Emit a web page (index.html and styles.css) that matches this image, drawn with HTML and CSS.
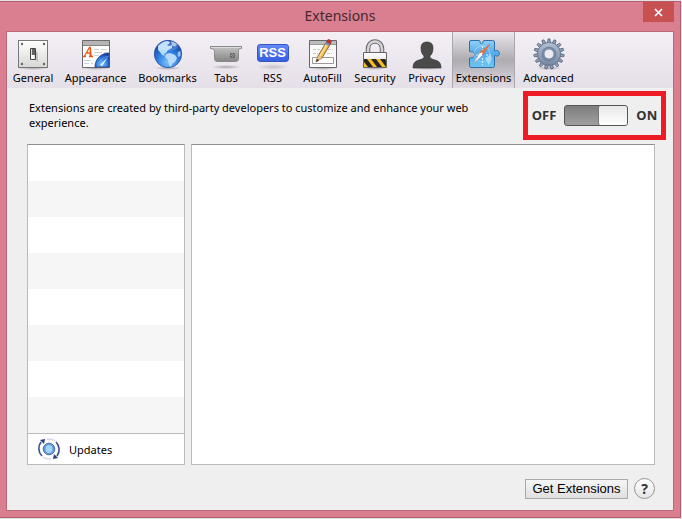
FILE: index.html
```html
<!DOCTYPE html>
<html lang="en">
<head>
<meta charset="utf-8">
<title>Extensions</title>
<link rel="stylesheet" href="styles.css">
</head>
<body>
<main class="window">
  <header class="titlebar">
    <h1 class="title">Extensions</h1>
    <button class="close" type="button" aria-label="Close"><svg width="9" height="9" viewBox="0 0 9 9"><path d="M1 1l7 7M8 1L1 8" stroke="#fff" stroke-width="1.7"/></svg></button>
  </header>
  <div class="client">
    <nav class="toolbar" aria-label="Preferences">
      <button class="tab" type="button">
        <svg class="icon" viewBox="0 0 32 32">
          <defs>
            <linearGradient id="plate" x2="0" y2="1"><stop stop-color="#fff"/><stop offset="1" stop-color="#d7d7d5"/></linearGradient>
            <radialGradient id="globe" cx=".5" cy=".8" r=".8"><stop stop-color="#7cc4fb"/><stop offset=".5" stop-color="#2f7be0"/><stop offset="1" stop-color="#12389a"/></radialGradient>
            <linearGradient id="metal" x2="0" y2="1"><stop stop-color="#c4c4c4"/><stop offset="1" stop-color="#858585"/></linearGradient>
            <radialGradient id="shade"><stop stop-color="#444" stop-opacity=".4"/><stop offset="1" stop-color="#444" stop-opacity="0"/></radialGradient>
          </defs>
          <ellipse cx="16" cy="30" rx="16" ry="2" fill="url(#shade)"/>
          <rect x="1.500" y="2.500" width="29" height="27" fill="url(#plate)" stroke="#777"/>
          <g fill="#666"><circle cx="5" cy="6" r="1.200"/><circle cx="27" cy="6" r="1.200"/><circle cx="5" cy="26" r="1.200"/><circle cx="27" cy="26" r="1.200"/></g>
          <path d="M18 22l3 2v-9l-2-2z" fill="#999" opacity=".5"/>
          <path d="M13.500 10.500h5v11h-5z" fill="#ddd" stroke="#444"/><path d="M15 11h3v6h-3z" fill="#666"/><path d="M14 17h3v4h-3z" fill="#fff"/>
        </svg>
        <span>General</span>
      </button>
      <button class="tab" type="button">
        <svg class="icon" viewBox="0 0 32 32">
          <ellipse cx="16" cy="30" rx="16" ry="2" fill="url(#shade)"/>
          <path d="M2.500 2.500h27v27h-27z" fill="#fdfdfd" stroke="#6c6c6c"/>
          <path d="M3 3h26v4H3z" fill="#b5b5b5"/><path d="M3 7.500h26" stroke="#858585"/>
          <path d="M14 11.500h5m2 0h6M14 14.500h8m2 0h3M14 17.500h5M4 22.500h7M4 25.500h5m2 0h2" stroke="#d0d0d0"/>
          <path d="M4.500 18L9.500 9.500h.8L11 18M7 15h4M3 18.500h3m3 0h4" fill="none" stroke="#ea561c" stroke-width="1.300"/><path d="M9.800 9l1.700 9H9.500z" fill="#ea561c"/>
          <path d="M15 29c0-8 6-14 14-14v14z" fill="url(#globe)" stroke="#1d3f8c" stroke-width=".8"/>
          <path d="M18 29c1-6 5-10 11-11M19 20l4 5" fill="none" stroke="#6fa8ec" stroke-width=".7"/>
          <path d="M20 27l8-8-6 9z" fill="#e8f5ff"/>
        </svg>
        <span>Appearance</span>
      </button>
      <button class="tab" type="button">
        <svg class="icon" viewBox="0 0 32 32">
          <ellipse cx="16" cy="30" rx="13" ry="2" fill="url(#shade)"/>
          <circle cx="16" cy="16" r="13.700" fill="url(#globe)" stroke="#1c4b9e" stroke-width=".7"/>
          <g fill="#b5dcf8">
            <path d="M6 8c3-3 6-4.500 9-5l3 1-1 2-2 1 2 1 3-1v3l-4 2-2 3-2 1 1 2-3-1-2-3-2-2z"/>
            <path d="M14 16l4-1 5 2 2 3-2 4-3 2-1 3-2-2-1-5-3-3z"/>
            <path d="M19 3.500c3 0 5 2 6 3l-2 2-3-1zM26 14l2.500-1v5l-2 1-1-2z" opacity=".8"/>
          </g>
          <ellipse cx="16" cy="8" rx="10.500" ry="5" fill="#fff" opacity=".18"/>
        </svg>
        <span>Bookmarks</span>
      </button>
      <button class="tab" type="button">
        <svg class="icon" viewBox="0 0 32 32">
          <ellipse cx="16" cy="29" rx="15" ry="2" fill="url(#shade)"/>
          <path d="M.5 8.500h31v2c-3 0-3 1-3 4v6c0 2-1 3-3 3h-18c-2 0-3-1-3-3v-6c0-3-1-4-4-4z" fill="url(#metal)" stroke="#888"/>
          <path d="M1 9.500h30" stroke="#ddd"/>
          <path d="M20.500 15.500h4v4h-4zM21 16l3 3m0-3l-3 3" fill="none" stroke="#606060" stroke-width=".8"/>
        </svg>
        <span>Tabs</span>
      </button>
      <button class="tab" type="button">
        <span class="icon rss"><b>RSS</b></span>
        <span>RSS</span>
      </button>
      <button class="tab" type="button">
        <svg class="icon" viewBox="0 0 32 32">
          <ellipse cx="16" cy="30" rx="15" ry="2" fill="url(#shade)"/>
          <path d="M2.500 2.500h27v27h-27z" fill="#fafafa" stroke="#666"/><path d="M3 3h26v3H3z" fill="#bdbdbd"/><path d="M3 6.500h26" stroke="#999"/>
          <path d="M6 11.500h8m7 0h5M6 15.500h5m9 0h5" stroke="#ccc" stroke-dasharray="3 1"/>
          <path d="M5.500 19.500h21v6h-21z" fill="#fff" stroke="#999"/>
          <path d="M9 24l2-6L20 3l4 2-9 15z" fill="#f3bd54" stroke="#704b25" stroke-width=".8"/>
          <path d="M13 18l8-14" stroke="#ffe59b" stroke-width="1.400"/>
          <path d="M19 5l2-4 3 1 1 1-2 4z" fill="#b93030"/><path d="M18 6l1-2 4 2-1 2z" fill="#7890b5"/>
          <path d="M9 24l2-6 4 2z" fill="#e5c18c"/><path d="M9 24l1-3 2 1z" fill="#222"/>
        </svg>
        <span>AutoFill</span>
      </button>
      <button class="tab" type="button">
        <svg class="icon" viewBox="0 0 32 32">
          <ellipse cx="16" cy="30" rx="14" ry="2" fill="url(#shade)"/>
          <path d="M9 16v-5C9 1 23 1 23 11v5" fill="none" stroke="#686868" stroke-width="4.500"/>
          <path d="M9 16v-5C9 1 23 1 23 11v5" fill="none" stroke="#d4d4d4" stroke-width="2.500"/>
          <path d="M4.500 14.500h23v15h-23z" fill="url(#plate)" stroke="#666"/>
          <path d="M5 21h22v8H5z" fill="#f6bd24"/>
          <path d="M5 21h3l6 8H9l-4-5zM12 21h5l6 8h-5zM21 21h5l1 1v7z" fill="#292620"/>
        </svg>
        <span>Security</span>
      </button>
      <button class="tab" type="button">
        <svg class="icon" viewBox="0 0 32 32">
          <ellipse cx="16" cy="30" rx="15" ry="2" fill="url(#shade)"/>
          <path d="M2 30c0-5 2-7 6-8 4-1 5-2 5-4-2-2-3-4-3-8 0-4 2-6 6-6s6 2 6 6c0 4-1 6-3 8 0 2 1 3 5 4 4 1 6 3 6 8z" fill="#4a4a4a" stroke="#303030" stroke-width=".6"/>
        </svg>
        <span>Privacy</span>
      </button>
      <button class="tab selected" type="button" aria-current="page">
        <svg class="icon" viewBox="0 0 32 32">
          <defs><linearGradient id="puzzle" x2="0" y2="1"><stop stop-color="#8fd0f7"/><stop offset=".5" stop-color="#53a9e8"/><stop offset="1" stop-color="#6cc8f2"/></linearGradient></defs>
          <path d="M1.500 4Q1.500 2.500 3 2.500H11C13 2.500 11 5.500 13.500 5.500S14 2.500 16 2.500H24.500Q26.500 2.500 26.500 4V13C28 13 28 12 29.500 12.500 32 13.500 32 17.500 29.500 18 28 18.300 28 17.500 26.500 17.500V27.500Q26.500 29.500 24.500 29.500H3Q1.500 29.500 1.500 27.500V20C3 19 6 21 6.500 17 6.500 12.500 3 14.500 1.500 13.500Z" fill="url(#puzzle)" stroke="#2f6ea8"/>
          <path d="M14.500 8v5m0 7v7M8 17h3m7 0h6" stroke="#e0f3ff" stroke-dasharray="2 1"/>
          <circle cx="14" cy="16" r="8" fill="none" stroke="#b6e2fa" stroke-width=".6"/>
          <path d="M17 20l5-3 2 3-1 3-2 4-2-3z" fill="#b5e3fb" opacity=".8"/>
          <path d="M5 26l7-12 3 3z" fill="#f8f8f8" stroke="#8593a0" stroke-width=".5"/><path d="M22 6l-7 11-3-3z" fill="#ed713d" stroke="#b7532d" stroke-width=".3"/><circle cx="13.500" cy="15.500" r="1" fill="#fff"/>
        </svg>
        <span>Extensions</span>
      </button>
      <button class="tab" type="button">
        <svg class="icon" viewBox="0 0 32 32">
          <defs>
            <linearGradient id="steel" x2="0" y2="1"><stop stop-color="#b3c0d2"/><stop offset="1" stop-color="#7486a2"/></linearGradient>
            <path id="tooth" d="M14.300 5.500L15 .9h2l.7 4.600z"/>
            <g id="teeth"><use href="#tooth"/><use href="#tooth" transform="rotate(24 16 16)"/><use href="#tooth" transform="rotate(48 16 16)"/><use href="#tooth" transform="rotate(72 16 16)"/><use href="#tooth" transform="rotate(96 16 16)"/></g>
          </defs>
          <ellipse cx="16" cy="30" rx="13" ry="2" fill="url(#shade)"/>
          <g fill="#93a3bb" stroke="#53637c" stroke-width=".8"><use href="#teeth"/><use href="#teeth" transform="rotate(120 16 16)"/><use href="#teeth" transform="rotate(240 16 16)"/></g>
          <path d="M16 4.500a11.500 11.500 0 1 0 .01 0zM16 11a5 5 0 1 1-.01 0z" fill="url(#steel)" stroke="#5d6e88" stroke-width=".8" fill-rule="evenodd"/>
          <circle cx="16" cy="16" r="6.500" fill="none" stroke="#7183a0" stroke-width="1.500"/>
        </svg>
        <span>Advanced</span>
      </button>
    </nav>
    <section class="content">
      <div class="intro">
        <p class="description">Extensions are created by third-party developers to customize and enhance your web experience.</p>
        <label class="power"><span>OFF</span><input class="switch" type="checkbox" role="switch" aria-label="Extensions" checked><span>ON</span></label>
      </div>
      <div class="panes">
        <div class="sidebar">
          <div class="rows"></div>
          <button class="updates" type="button">
            <svg width="24" height="22" viewBox="0 0 24 22">
              <circle cx="12" cy="11" r="5.800" fill="#5e9ddd" stroke="#54709e"/><ellipse cx="12" cy="11" rx="3.500" ry="4" fill="#a4d4f6"/>
              <path d="M5 18C1 14 1 8 4 4" fill="none" stroke="#3c4b8e" stroke-width="1.600"/><path d="M3 2l5-1-1 5z" fill="#2e3c7d"/>
              <path d="M19 4c4 4 4 10 1 14" fill="none" stroke="#3c4b8e" stroke-width="1.600"/><path d="M21 20l-5 1 1-5z" fill="#2e3c7d"/>
              <path d="M6 19c2 2 5 2 8 2M10 1c3 0 6 0 8 2" fill="none" stroke="#d5d8e8" stroke-width="1.500"/>
            </svg>
            <span>Updates</span>
          </button>
        </div>
        <div class="detail"></div>
      </div>
      <footer class="actions">
        <button class="get" type="button">Get Extensions</button>
        <button class="help" type="button" aria-label="Help">?</button>
      </footer>
    </section>
  </div>
</main>
</body>
</html>
```
FILE: styles.css
```css
* { box-sizing: border-box; }
body {
  margin: 0;
  padding: 1px 1px 1px 0;
  background: #e4e1e2;
  color: #000;
  font: 11px/15px "Noto Sans", "Open Sans", sans-serif;
}
button { margin: 0; padding: 0; border: 0; background: none; color: inherit; font: inherit; }
svg { display: block; }
.window {
  display: flex;
  flex-direction: column;
  min-height: calc(100vh - 2px);
  padding: 0 6px 6px;
  border: solid #b45f70;
  border-width: 1px 1px 1px 0;
  background: #d97f8f;
}
.titlebar { display: grid; grid-template-columns: 1fr auto 1fr; align-items: start; height: 29px; }
.title { grid-column: 2; margin: 4px 0 0; color: #45282e; font-size: 14px; font-weight: 400; line-height: 20px; }
.close { display: grid; place-items: center; justify-self: end; width: 31px; height: 20px; background: #c75050; }
.client { flex: 1; display: flex; flex-direction: column; border: 1px solid #b96978; background: #efefef; }
.toolbar {
  display: grid;
  grid-template-columns: 52px 73px 71px 46px 47px 53px 52px 51px 63px 67px;
  height: 56px;
  background: linear-gradient(#f4eef5, #e5dfe8);
}
.tab { display: flex; flex-direction: column; align-items: center; padding-top: 6px; white-space: nowrap; }
.icon { flex: none; width: 32px; height: 32px; }
.rss { display: grid; align-content: start; padding-top: 6px; background: radial-gradient(ellipse at center, #99999977, transparent 70%) bottom / 100% 6px no-repeat; }
.rss b { border: 1px solid #3158c5; border-radius: 3px; background: linear-gradient(#6588f4, #365fe0); color: #fff; font: bold 13px/16px "Liberation Sans", sans-serif; text-align: center; }
.selected {
  border: solid #aaa6ad;
  border-width: 0 1px;
  background: linear-gradient(#ece7ee, #aeabb1 50%, #e2dce5);
}
.content { flex: 1; display: flex; flex-direction: column; padding: 3px 18px 11px 20px; }
.intro { display: flex; justify-content: space-between; gap: 16px; margin-right: -11px; }
.description { flex: 1; max-width: 464px; margin: 9px 0 0; padding-left: 2px; }
.power { display: flex; align-items: center; justify-content: center; gap: 8px; width: 143px; height: 49px; border: 5px solid #ed1c24; color: #333; font-size: 13px; font-weight: 700; }
.switch {
  appearance: none;
  width: 64px;
  height: 21px;
  margin: 0;
  border: 1px solid #555;
  border-radius: 3px;
  background: linear-gradient(#7d7d7d, #a0a0a0);
}
.switch::before {
  content: "";
  display: block;
  width: 28px;
  height: 19px;
  border-left: 1px solid #777;
  border-radius: 2px;
  background: linear-gradient(#e8e8e8, #fefefe);
}
.switch:checked::before { margin-left: auto; }
.panes { flex: 1; display: grid; grid-template-columns: 158px 1fr; gap: 6px; margin-top: 4px; }
.sidebar, .detail { border: 1px solid #bbb; border-top-color: #8e8e8e; background: #fff; }
.sidebar { display: flex; flex-direction: column; }
.rows { flex: 1; background: repeating-linear-gradient(#fff 0 36px, #f6f6f6 36px 72px); }
.updates { display: flex; align-items: center; gap: 8px; height: 31px; padding-left: 9px; border-top: 1px solid #bbb; }
.actions { display: flex; justify-content: flex-end; align-items: center; gap: 6px; margin-top: 13px; }
.get { width: 103px; height: 20px; border: 1px solid #a9a9a9; background: linear-gradient(#f5f5f5, #e0e0e0); font: 13px/16px "Liberation Sans", sans-serif; }
.help { width: 21px; height: 21px; border: 1px solid #949494; border-radius: 50%; background: linear-gradient(#fff, #e6e6e6); color: #333; font-size: 14px; font-weight: 700; line-height: 18px; }
```
